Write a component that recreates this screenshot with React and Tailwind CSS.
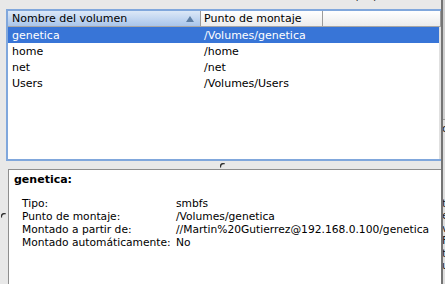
import React from "react";

const volumes = [
  { name: "genetica", mount: "/Volumes/genetica", selected: true },
  { name: "home", mount: "/home" },
  { name: "net", mount: "/net" },
  { name: "Users", mount: "/Volumes/Users" },
];

const details = [
  ["Tipo:", "smbfs"],
  ["Punto de montaje:", "/Volumes/genetica"],
  ["Montado a partir de:", "//Martin%20Gutierrez@192.168.0.100/genetica"],
  ["Montado automáticamente:", "No"],
];

export default function App() {
  return (
    <div
      className="w-[445px] h-[284px] bg-[#e8e8e8] flex overflow-hidden text-[11px] text-black"
      style={{ fontFamily: '"DejaVu Sans", "Liberation Sans", sans-serif' }}
    >
      {/* main window */}
      <div className="w-[441px] flex flex-col">
        {/* top strip with clipped text from the toolbar */}
        <div className="h-[9px] overflow-hidden flex justify-end pr-[14px]">
          <span className="-mt-[10px] leading-[13px] text-[#222]">10/04/08 12:00</span>
        </div>

        <div className="flex-1 flex flex-col pl-[6px]">
          {/* volume table with focus ring */}
          <div className="h-[152px] border-2 border-r-0 border-[#80a7dc] bg-white flex flex-col">
            {/* header */}
            <div className="h-[16px] flex border-b border-[#a6a6a6] leading-[15px]">
              <div className="w-[192px] flex items-center justify-between pl-[4px] pr-[6px] bg-gradient-to-b from-[#dce8f7] to-[#a9c5ea]">
                <span>Nombre del volumen</span>
                <svg width="8" height="6" viewBox="0 0 8 6">
                  <path d="M4 0 L8 6 L0 6 Z" fill="#5d7ea4" />
                </svg>
              </div>
              <div className="w-[122px] pl-[3px] border-l border-[#9c9c9c] bg-gradient-to-b from-[#ffffff] to-[#ececec] flex items-center">
                <span>Punto de montaje</span>
              </div>
              <div className="flex-1 border-l border-[#9c9c9c] border-r bg-gradient-to-b from-[#ffffff] to-[#ececec]" />
            </div>
            {/* rows */}
            <div className="flex-1 border-r-2 border-[#e0e0e0]">
              {volumes.map((v) => (
                <div
                  key={v.name}
                  className={`h-[16px] flex items-center leading-[16px] pt-[1px] ${
                    v.selected ? "bg-[#3875d7] text-white" : ""
                  }`}
                >
                  <div className="w-[192px] pl-[4px]">{v.name}</div>
                  <div className="pl-[4px]">{v.mount}</div>
                </div>
              ))}
            </div>
          </div>

          {/* splitter */}
          <div className="h-[8px] flex items-center pl-[214px]">
            <svg width="5" height="5" viewBox="0 0 5 5">
              <path d="M0.6 4.6 A3 3 0 0 1 4.6 0.8" stroke="#333" strokeWidth="1.5" fill="none" />
            </svg>
          </div>

          {/* details panel */}
          <div className="flex-1 flex">
            <div className="w-[7px] -ml-[5px] flex flex-col">
              <div className="h-[44px] shrink-0" />
              <svg width="5" height="5" viewBox="0 0 5 5">
                <path d="M0.6 4.6 A3 3 0 0 1 4.6 0.8" stroke="#333" strokeWidth="1.4" fill="none" />
              </svg>
            </div>
            <div className="flex-1 bg-white border-t border-l border-[#8e8e8e] pt-[3px] pl-[5px] leading-[13px]">
              <div className="font-bold">genetica:</div>
              <div className="mt-[11px] pl-[8px] text-[10.7px]">
                {details.map(([label, value]) => (
                  <div key={label} className="flex">
                    <div className="w-[154px] whitespace-nowrap">{label}</div>
                    <div className="whitespace-nowrap">{value}</div>
                  </div>
                ))}
              </div>
            </div>
          </div>
        </div>
      </div>

      {/* window edge */}
      <div className="w-[2px] bg-[#747474]" />

      {/* neighbouring window fragments */}
      <div className="w-[2px] bg-[#dedede] overflow-hidden flex flex-col leading-[12.5px] text-[11px] text-[#222]">
        <div className="h-[120px] border-b border-[#9a9a9a] bg-[#cfcfcf]" />
        <div className="mt-[3px] -ml-[1px]">o</div>
        <div className="mt-[62px] -ml-[1px]">t</div>
        <div className="-ml-[1px]">e</div>
        <div className="-ml-[1px]">v</div>
        <div className="-ml-[1px]">F</div>
        <div className="-ml-[1px]">t</div>
        <div className="-ml-[1px]">u</div>
      </div>
    </div>
  );
}
